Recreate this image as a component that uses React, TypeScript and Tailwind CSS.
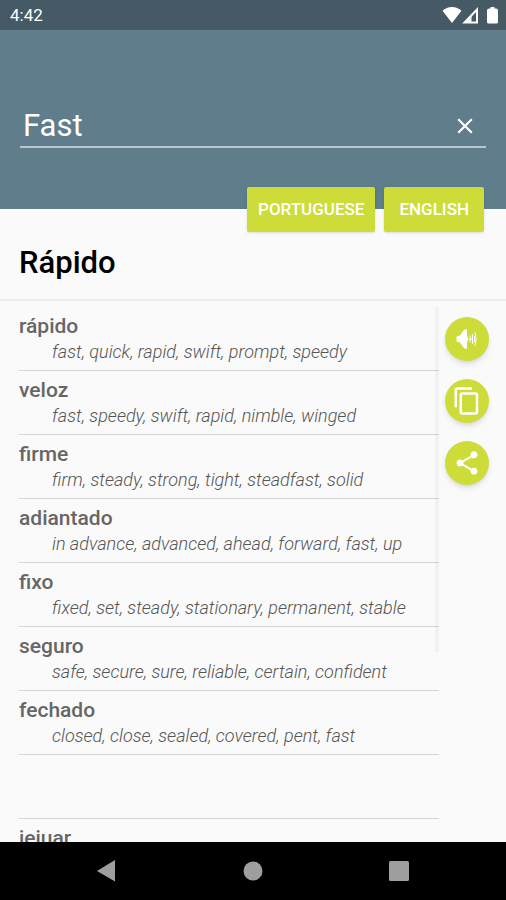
import { useState } from "react"
import type { ReactNode } from "react"
import { MdClose, MdContentCopy, MdShare } from "react-icons/md"

const entries = [
  { word: "rápido", meanings: "fast, quick, rapid, swift, prompt, speedy" },
  { word: "veloz", meanings: "fast, speedy, swift, rapid, nimble, winged" },
  { word: "firme", meanings: "firm, steady, strong, tight, steadfast, solid" },
  { word: "adiantado", meanings: "in advance, advanced, ahead, forward, fast, up" },
  { word: "fixo", meanings: "fixed, set, steady, stationary, permanent, stable" },
  { word: "seguro", meanings: "safe, secure, sure, reliable, certain, confident" },
  { word: "fechado", meanings: "closed, close, sealed, covered, pent, fast" },
  { word: "", meanings: "" },
  { word: "jejuar", meanings: "" },
]

function StatusBar() {
  return (
    <div className="flex h-[30px] shrink-0 items-center justify-between bg-[#455a64] pl-[10px] pr-2 text-white">
      <span className="text-[17px] leading-5">4:42</span>
      <div className="flex items-center">
        <svg width="20" height="18" viewBox="0 0 20 18" fill="currentColor" aria-hidden="true">
          <path d="M10 1C6.300 1 3 2.300.5 4.800L10 17 19.500 4.800C17 2.300 13.700 1 10 1Z" />
        </svg>
        <svg width="17" height="18" viewBox="0 0 17 18" aria-hidden="true">
          <path fill="none" stroke="currentColor" strokeWidth="2" d="M15 3.500V16.500H2.500Z" />
          <path fill="currentColor" d="M9.500 8.500V16H2.500Z" />
        </svg>
        <svg className="ml-2" width="11" height="18" viewBox="0 0 11 18" fill="currentColor" aria-hidden="true">
          <path d="M3.500 1h4v1.500H9q2 0 2 2V16q0 1.500-1.500 1.500h-8Q0 17.500 0 16V4.500q0-2 2-2h1.500Z" />
        </svg>
      </div>
    </div>
  )
}

function SpeakerIcon() {
  return (
    <svg width="22" height="22" viewBox="0 0 22 22" aria-hidden="true">
      <path fill="currentColor" d="M.500 8.500 4 7.500 7.500 2.500q1.500-2 3.500-1V7.500q2 3.500 0 7V20.500q-2 1-3.500-1L4 14.500.500 13.500Z" />
      <path
        fill="none"
        stroke="currentColor"
        strokeLinecap="round"
        d="M13 11h3.500M14 8q1.500 3 0 6M16.500 6.500v9M19 4.500q2.500 6.500 0 13M18.500 8.500v5"
      />
    </svg>
  )
}

function LanguageButton({ children }: { children: ReactNode }) {
  return (
    <button
      type="button"
      className="h-[45px] rounded-xs bg-[#cddc39] px-[11px] text-[17px] font-medium text-white shadow-sm last:px-[15px]"
    >
      {children}
    </button>
  )
}

function RoundButton({ label, children }: { label: string; children: ReactNode }) {
  return (
    <button
      type="button"
      aria-label={label}
      className="flex size-11 items-center justify-center rounded-full bg-[#cddc39] text-white shadow-md"
    >
      {children}
    </button>
  )
}

function NavBar() {
  return (
    <nav className="flex h-[58px] shrink-0 items-center justify-center gap-[100px] bg-black text-[#9e9e9e]">
      <button type="button" aria-label="Back" className="flex w-[46px] justify-center">
        <svg width="20" height="22" viewBox="0 0 20 22" fill="currentColor" aria-hidden="true">
          <path d="M18 0v21.500L0 11Z" />
        </svg>
      </button>
      <button type="button" aria-label="Home" className="flex w-[46px] justify-center">
        <svg width="20" height="20" viewBox="0 0 20 20" fill="currentColor" aria-hidden="true">
          <circle cx="10" cy="10" r="9.500" />
        </svg>
      </button>
      <button type="button" aria-label="Recent apps" className="flex w-[46px] justify-center">
        <svg width="20" height="20" viewBox="0 0 20 20" fill="currentColor" aria-hidden="true">
          <rect width="20" height="20" rx="1.500" />
        </svg>
      </button>
    </nav>
  )
}

export default function App() {
  const [query, setQuery] = useState("Fast")

  return (
    <div className="flex h-screen flex-col bg-[#fafafa] font-['Roboto',sans-serif]">
      <StatusBar />

      <header className="flex h-[179px] shrink-0 flex-col bg-[#607d8b] px-5 pt-[76px]">
        <div className="flex h-[42px] items-center border-b-2 border-[#b9c6d0] pl-[3px] pr-2">
          <input
            type="text"
            aria-label="Word to translate"
            value={query}
            onChange={(e) => setQuery(e.target.value)}
            className="min-w-0 flex-1 bg-transparent text-[31px] leading-9 text-white outline-none"
          />
          <button type="button" aria-label="Clear" className="text-white" onClick={() => setQuery("")}>
            <MdClose className="size-[26px]" />
          </button>
        </div>
      </header>

      <div className="-mt-[22px] flex shrink-0 justify-end gap-[9px] pr-[22px]">
        <LanguageButton>PORTUGUESE</LanguageButton>
        <LanguageButton>ENGLISH</LanguageButton>
      </div>

      <h1 className="shrink-0 border-b-2 border-[#ececec] px-[19px] pt-[13px] pb-[18px] text-[31px] leading-9 font-medium text-black">
        Rápido
      </h1>

      <main className="flex min-h-0 flex-1 pt-[6px]">
        <div className="relative ml-[19px] min-w-0 flex-1 overflow-hidden">
          <ul>
            {entries.map((entry, index) => (
              <li key={index} className="h-16 border-b border-[#d6d6d6] pt-[7px]">
                <p className="text-[21px] leading-6 font-medium text-[#666666]">{entry.word}</p>
                <p className="pl-[33px] pt-1 text-[18px] leading-5 font-light text-[#555555] italic">{entry.meanings}</p>
              </li>
            ))}
          </ul>
          <div className="absolute top-0 right-0 h-[345px] w-1 bg-black/3" />
        </div>

        <div className="flex w-[67px] shrink-0 flex-col items-center gap-[18px] pt-[10px] pr-[11px]">
          <RoundButton label="Listen">
            <SpeakerIcon />
          </RoundButton>
          <RoundButton label="Copy">
            <MdContentCopy className="size-[30px]" />
          </RoundButton>
          <RoundButton label="Share">
            <MdShare className="size-7" />
          </RoundButton>
        </div>
      </main>

      <NavBar />
    </div>
  )
}
